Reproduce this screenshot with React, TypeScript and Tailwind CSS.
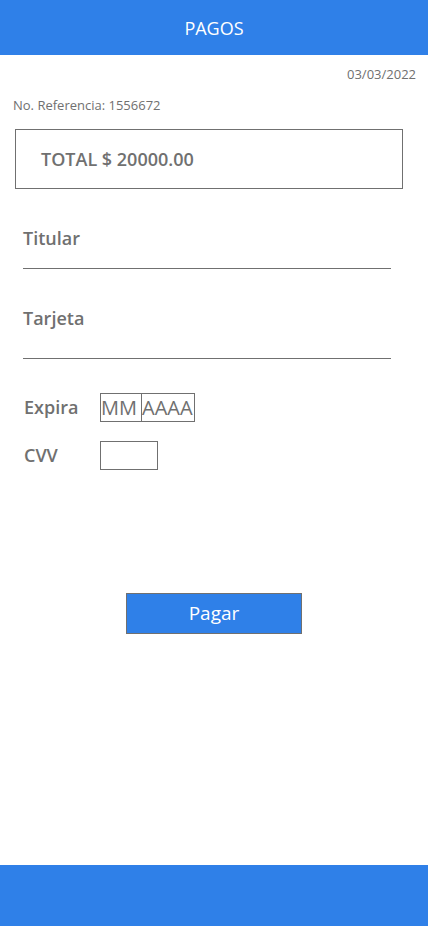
import React from 'react';

const font = { fontFamily: '"Open Sans", "Noto Sans", sans-serif' };

export default function App() {
  return (
    <div className="w-[428px] h-[926px] flex flex-col bg-white text-[#707070]" style={font}>
      {/* Header */}
      <div className="h-[55px] bg-[#2f80e8] flex items-center justify-center">
        <span className="text-white text-[18px] leading-none">PAGOS</span>
      </div>

      <div className="flex-1 flex flex-col">
        <div className="mt-[10px] pr-[12px] text-right text-[13px] leading-[18px]">03/03/2022</div>
        <div className="mt-[13px] pl-[13px] text-[13px] leading-[18px]">No. Referencia: 1556672</div>

        {/* Total */}
        <div className="mt-[15px] ml-[15px] w-[388px] h-[60px] border border-[#707070] flex items-center pl-[25px]">
          <span className="text-[18px] font-semibold">TOTAL $ 20000.00</span>
        </div>

        {/* Titular */}
        <div className="mt-[37px] pl-[23px] text-[18px] font-semibold leading-[24px]">Titular</div>
        <div className="mt-[18px] ml-[23px] w-[368px] h-px bg-[#707070]" />

        {/* Tarjeta */}
        <div className="mt-[37px] pl-[23px] text-[18px] font-semibold leading-[24px]">Tarjeta</div>
        <div className="mt-[28px] ml-[23px] w-[368px] h-px bg-[#707070]" />

        {/* Expira */}
        <div className="mt-[34px] pl-[24px] flex items-center">
          <span className="w-[76px] text-[18px] font-semibold">Expira</span>
          <div className="flex h-[29px] border border-[#707070]">
            <div className="w-[41px] border-r border-[#707070] flex items-center text-[20px] leading-none">MM</div>
            <div className="w-[52px] flex items-center text-[20px] leading-none">AAAA</div>
          </div>
        </div>

        {/* CVV */}
        <div className="mt-[19px] pl-[24px] flex items-center">
          <span className="w-[76px] text-[18px] font-semibold">CVV</span>
          <div className="w-[58px] h-[29px] border border-[#707070]" />
        </div>

        {/* Pagar */}
        <div className="mt-[123px] pl-[126px]">
          <button className="w-[176px] h-[41px] bg-[#2f80e8] border border-[#707070] text-white text-[19px] flex items-center justify-center">
            Pagar
          </button>
        </div>
      </div>

      {/* Footer */}
      <div className="h-[61px] bg-[#2f80e8]" />
    </div>
  );
}
